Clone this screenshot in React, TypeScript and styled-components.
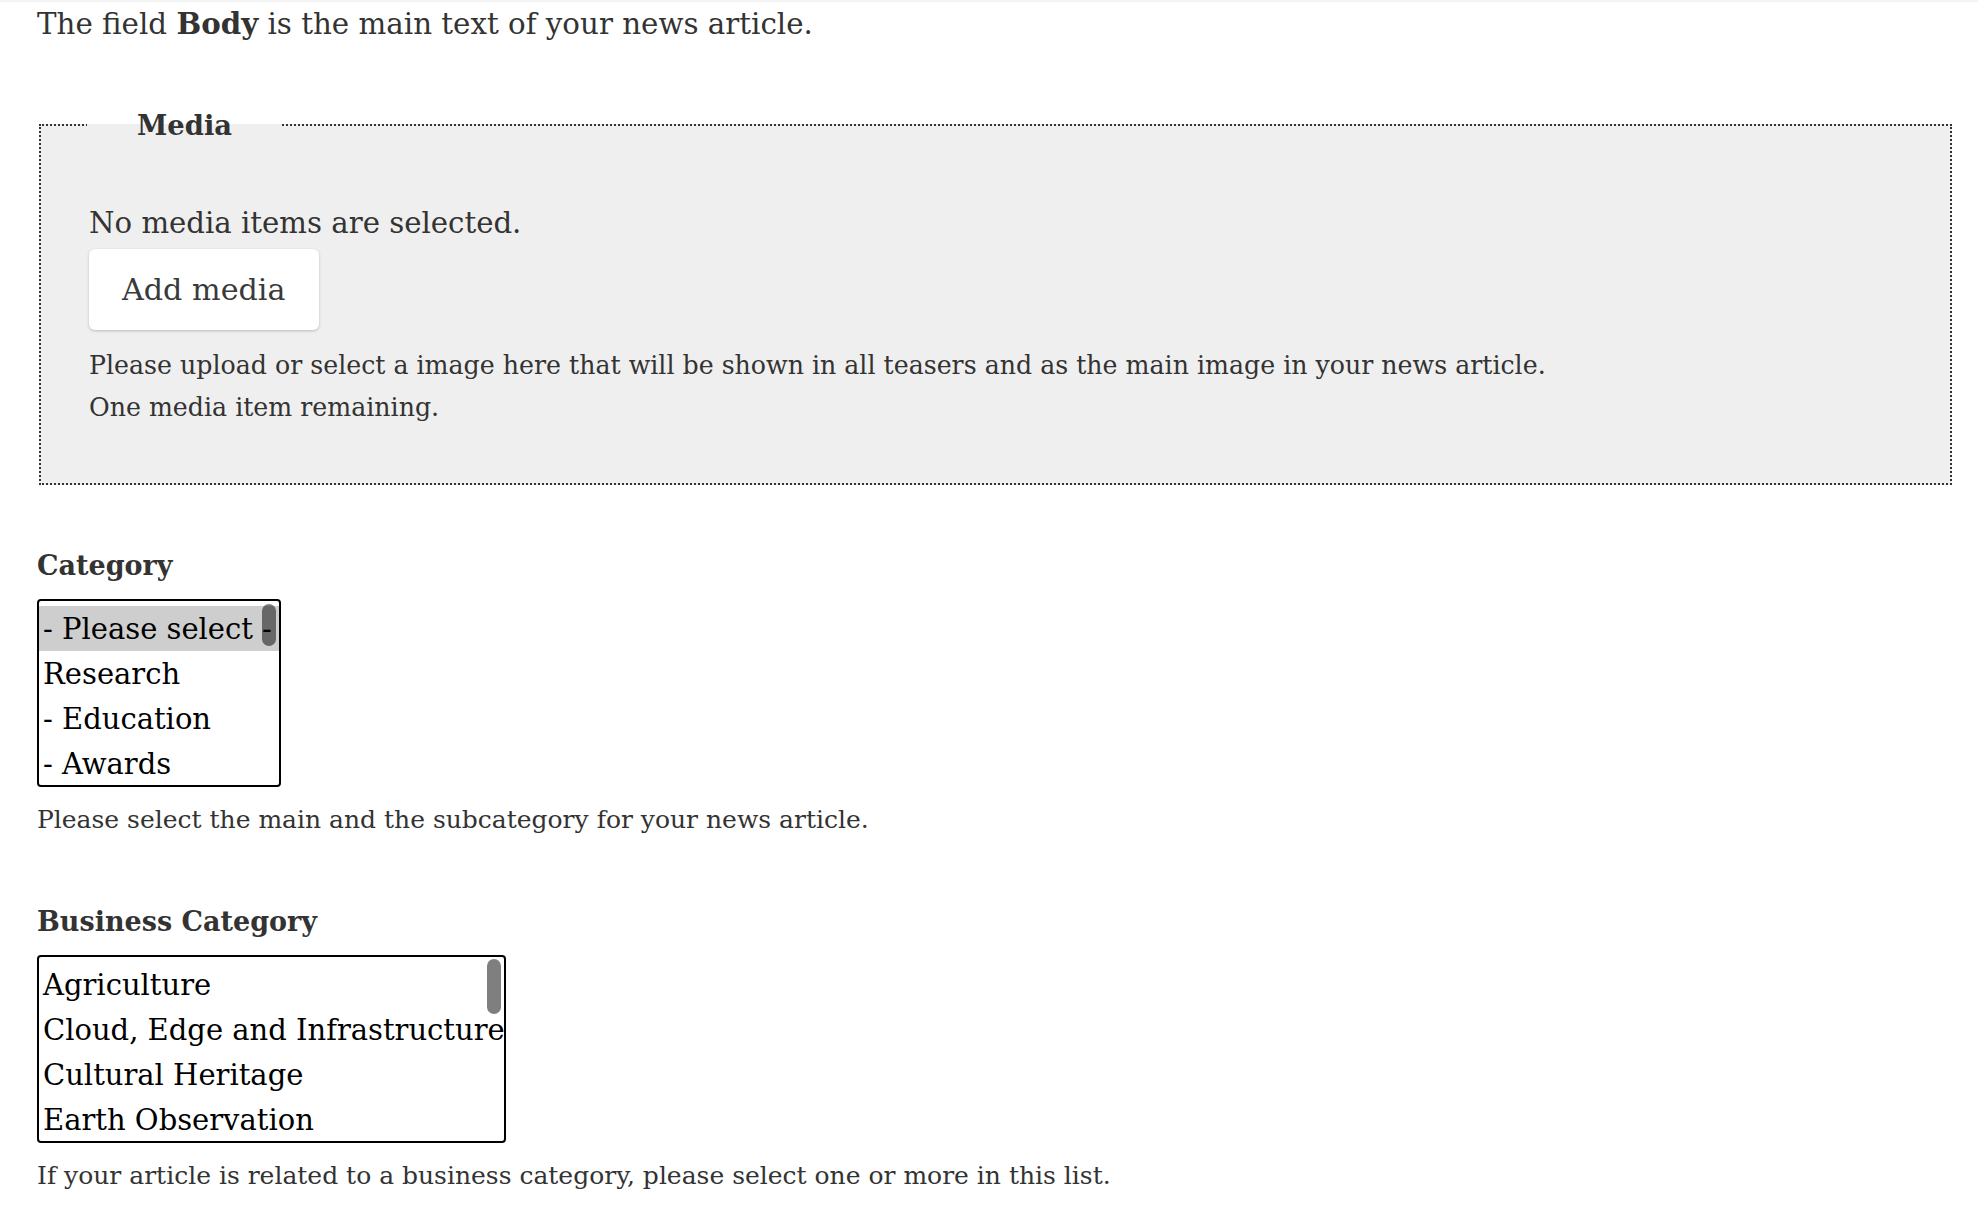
import styled, { createGlobalStyle } from "styled-components";

const GlobalStyle = createGlobalStyle`
  body {
    margin: 0;
    background: #fff;
    font-family: "DejaVu Serif", "Liberation Serif", serif;
    color: #333;
  }
`;

const Page = styled.main`
  border-top: 2px solid #f4f4f4;
  padding: 1px 24px 40px 37px;
`;

const Intro = styled.p`
  margin: 0;
  font-size: 29.3px;
  line-height: 42px;

  strong {
    font-weight: 700;
  }
`;

const MediaFieldset = styled.fieldset`
  margin: 60px 2px 0;
  padding: 0 48px 54px;
  border: 2px dotted #333;
  background: #efefef;
`;

const Legend = styled.legend`
  margin-left: -2px;
  padding: 0 50px;
  font-size: 27.4px;
  line-height: 40px;
  font-weight: 700;
  color: #333;
`;

const EmptyNote = styled.p`
  margin: 56px 0 0;
  font-size: 29.2px;
  line-height: 44px;
`;

const AddButton = styled.button`
  display: block;
  margin-top: 4px;
  padding: 18px 33px;
  border: none;
  border-radius: 6px;
  background: #fff;
  box-shadow: 0 1px 3px rgba(0, 0, 0, 0.22);
  font-family: inherit;
  font-size: 30.2px;
  line-height: 45px;
  color: #3a3a3a;
  cursor: pointer;
`;

const Description = styled.div`
  margin-top: 15px;
  font-size: 25.25px;
  line-height: 42px;
`;

const Field = styled.div`
  display: flex;
  flex-direction: column;
  align-items: flex-start;
  margin-top: 61px;
`;

const Label = styled.label`
  font-size: 27px;
  line-height: 40px;
  font-weight: 700;
  color: #333;
`;

const ListBox = styled.div<{ $width: number }>`
  position: relative;
  box-sizing: border-box;
  width: ${(p) => p.$width}px;
  height: 188px;
  margin-top: 13px;
  padding-top: 5px;
  border: 2px solid #000;
  border-radius: 4px;
  background: #fff;
  overflow: hidden;
`;

const Option = styled.div<{ $selected?: boolean }>`
  padding: 1px 4px 0;
  height: 45px;
  box-sizing: border-box;
  font-size: 29px;
  line-height: 44px;
  color: #000;
  white-space: nowrap;
  background: ${(p) => (p.$selected ? "#cecece" : "transparent")};
`;

// overlay scrollbar thumb, drawn over the options like the macOS one
const Thumb = styled.span<{ $top: number; $height: number }>`
  position: absolute;
  right: 3px;
  top: ${(p) => p.$top}px;
  width: 14px;
  height: ${(p) => p.$height}px;
  border-radius: 7px;
  background: rgba(0, 0, 0, 0.5);
`;

const Help = styled.div`
  margin-top: 12px;
  font-size: 25px;
  line-height: 42px;
`;

// only the rows visible in the 4-row list boxes
const categories = ["- Please select -", "Research", "- Education", "- Awards"];

const businessCategories = [
  "Agriculture",
  "Cloud, Edge and Infrastructure",
  "Cultural Heritage",
  "Earth Observation",
];

export default function App() {
  return (
    <Page>
      <GlobalStyle />
      <Intro>
        The field <strong>Body</strong> is the main text of your news article.
      </Intro>

      <MediaFieldset>
        <Legend>Media</Legend>
        <EmptyNote>No media items are selected.</EmptyNote>
        <AddButton type="button">Add media</AddButton>
        <Description>
          Please upload or select a image here that will be shown in all teasers
          and as the main image in your news article.
          <br />
          One media item remaining.
        </Description>
      </MediaFieldset>

      <Field>
        <Label>Category</Label>
        <ListBox $width={244} role="listbox">
          {categories.map((c, i) => (
            <Option key={c} $selected={i === 0}>
              {c}
            </Option>
          ))}
          <Thumb $top={3} $height={42} />
        </ListBox>
        <Help>Please select the main and the subcategory for your news article.</Help>
      </Field>

      <Field>
        <Label>Business Category</Label>
        <ListBox $width={469} role="listbox" aria-multiselectable>
          {businessCategories.map((c) => (
            <Option key={c}>{c}</Option>
          ))}
          <Thumb $top={2} $height={55} />
        </ListBox>
        <Help>
          If your article is related to a business category, please select one or
          more in this list.
        </Help>
      </Field>
    </Page>
  );
}
